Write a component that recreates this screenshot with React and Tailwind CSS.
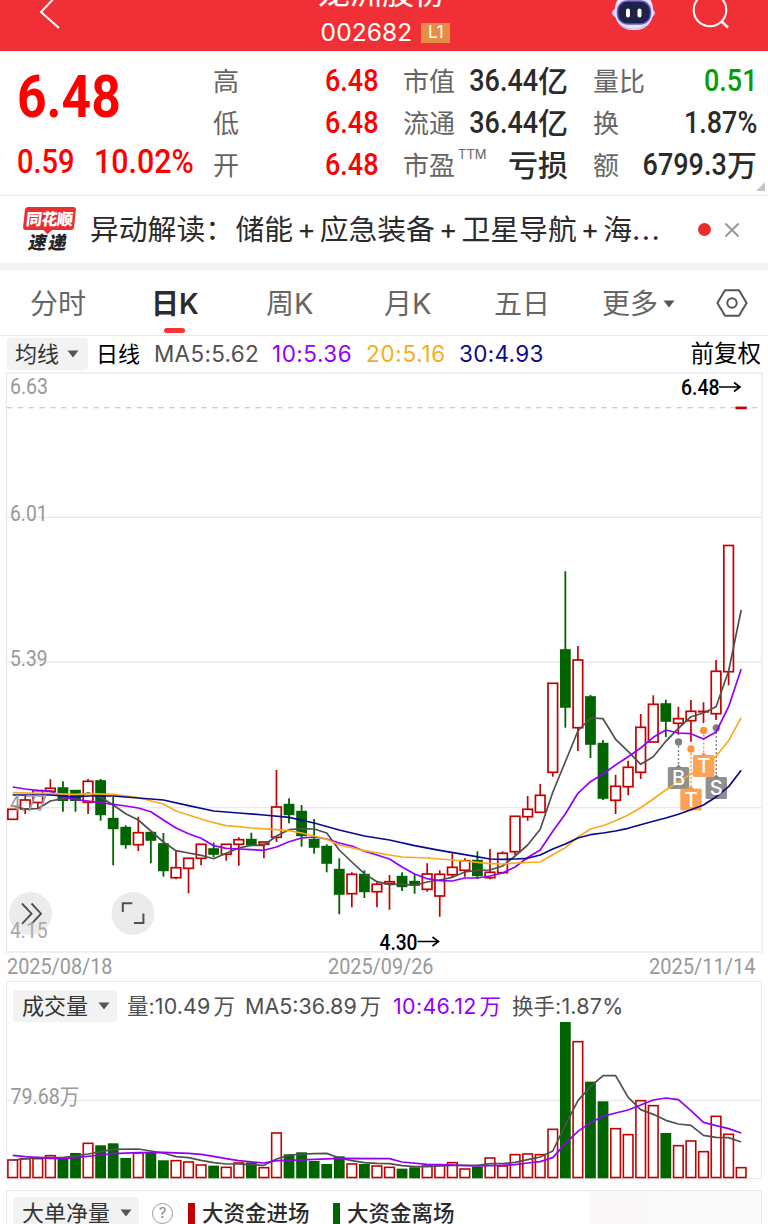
const STEP = 12.56;
const X0 = 12.7;
const RED = "#c40000";
const GREEN = "#006400";

// [high, body top, body bottom, low, color]
const candles = [
  [809.3, 809.3, 819.3, 819.3, "r"], [796, 800, 809, 814, "r"], [790.5, 790.5, 802.5, 809, "r"],
  [779.3, 788.3, 791.3, 792.5, "r"], [781.3, 787.7, 800.5, 811.7, "g"], [790.3, 790.3, 800.5, 811.7, "g"],
  [779, 781.3, 802.3, 814, "r"], [779, 780.7, 814.7, 820.7, "g"], [796.7, 818.3, 828.7, 865.3, "g"],
  [825.3, 827.3, 844.7, 848.7, "g"], [816.7, 832.7, 844.7, 851, "r"], [832.3, 832.3, 840.3, 863.3, "g"],
  [833, 843.7, 870.7, 876.7, "g"], [850.7, 867.7, 877.7, 879.3, "r"], [858.3, 858.3, 868.3, 893.3, "r"],
  [844.3, 844.3, 858.3, 865.3, "r"], [842.7, 848.7, 854.3, 857.3, "g"], [844.3, 844.3, 854.3, 860.7, "r"],
  [837.3, 839.7, 844.3, 865.7, "r"], [832.7, 839.3, 845, 845, "g"], [842, 842, 844.3, 858.3, "r"],
  [770, 807, 837.3, 842, "r"], [798.3, 804.3, 814.7, 823.3, "g"], [805, 811.3, 835.7, 846.7, "g"],
  [819, 839.3, 847.3, 853.7, "g"], [844.3, 846.3, 863.3, 872.3, "g"], [858.3, 869.3, 894.3, 914.3, "g"],
  [872.3, 874.3, 893.7, 907.3, "r"], [870.3, 874.3, 891.7, 898, "g"], [881, 884.3, 891.7, 907.3, "r"],
  [875, 881.7, 883.7, 909.7, "r"], [872.3, 876.3, 886.7, 891, "g"], [874.3, 881.3, 885.3, 893.7, "g"],
  [863.3, 874, 889.3, 891.7, "r"], [870.3, 874.3, 896, 916.7, "r"], [853.3, 867.3, 874.7, 877, "r"],
  [858.3, 860.7, 870.3, 876.7, "r"], [851.3, 860.3, 875.7, 879, "g"], [849, 872.3, 877.7, 879.3, "r"],
  [851.3, 853.3, 872.7, 872.7, "r"], [816.3, 816.3, 851.7, 855, "r"], [796, 809.3, 816.7, 820.7, "r"],
  [784, 795.3, 812.3, 812.3, "r"], [683.3, 683.3, 772.3, 776.7, "r"], [571.3, 649.7, 707.3, 727.7, "g"],
  [646, 660, 727.7, 751, "r"], [695, 696.7, 744.3, 758, "g"], [740, 743.3, 798.3, 800, "g"],
  [774.7, 786.3, 800.3, 814, "r"], [760.7, 767.3, 786.7, 795.3, "r"], [714, 727.3, 772.3, 779, "r"],
  [695.3, 704.3, 742, 742, "r"], [699.7, 703.7, 721.3, 737, "g"], [706.7, 718.7, 723.3, 734.7, "r"],
  [700, 711.3, 720.7, 741.7, "r"], [702.3, 711.4, 711.8, 723, "r"], [660, 671.3, 713.7, 720, "r"],
  [545.5, 545.5, 671.7, 685.3, "r"], [407.4, 407.4, 408.4, 408.4, "r"],
];

const averages = [
  ["#505050", [[0, 806], [1, 809], [2, 808.7], [3, 801], [4, 798.7], [5, 798], [6, 792.7], [7, 797], [8, 805], [9, 813.7], [10, 820], [11, 831], [12, 842], [13, 850.7], [14, 853], [15, 855.3], [16, 858.7], [17, 853.3], [18, 848], [19, 845.3], [20, 845.3], [21, 836], [22, 829.7], [23, 828.7], [24, 829], [25, 833], [26, 850], [27, 862], [28, 873.7], [29, 881.7], [30, 884.7], [31, 884], [32, 885.3], [33, 882], [34, 880], [35, 877.3], [36, 872], [37, 870.3], [38, 870], [39, 866], [40, 856], [41, 845], [42, 829.3], [43, 792.3], [44, 761.7], [45, 731], [46, 718], [47, 718.7], [48, 739.3], [49, 751.3], [50, 764.3], [51, 756.7], [52, 741.3], [53, 728.3], [54, 716.7], [55, 713], [56, 706.7], [57, 671], [58, 610]]],
  ["#9400f6", [[0, 787], [1, 789], [2, 790.7], [3, 791], [4, 797], [5, 799.7], [6, 801], [7, 802.7], [8, 804.3], [9, 806], [10, 808], [11, 811.7], [12, 820], [13, 828], [14, 833.7], [15, 838.3], [16, 845.7], [17, 848.3], [18, 849], [19, 849.7], [20, 850.3], [21, 847], [22, 841.7], [23, 838], [24, 837], [25, 839], [26, 843], [27, 846], [28, 851.3], [29, 855], [30, 859], [31, 867], [32, 874], [33, 878.7], [34, 880.7], [35, 881], [36, 878], [37, 878], [38, 876], [39, 873], [40, 867], [41, 857.5], [42, 850], [43, 831.3], [44, 814], [45, 793.3], [46, 781.7], [47, 774], [48, 765], [49, 756.7], [50, 748], [51, 737.3], [52, 730], [53, 733], [54, 733.7], [55, 739], [56, 732], [57, 706.7], [58, 669]]],
  ["#f8ac1c", [[0, 792.7], [5, 794.3], [6, 793.7], [8, 794.3], [10, 797.7], [12, 804], [13, 811], [14, 815], [15, 819], [16, 822.7], [17, 825.7], [18, 826.7], [19, 828], [21, 829.7], [22, 830.7], [23, 833], [24, 836], [25, 839.3], [26, 845], [28, 850.7], [30, 855], [31, 857], [33, 858], [35, 860], [36, 861], [38, 863.7], [39, 864], [40, 863], [42, 862], [43, 854.7], [44, 847.7], [45, 837.3], [46, 829], [47, 825.7], [48, 820.7], [49, 815], [50, 807.7], [51, 799], [52, 790], [53, 782], [54, 774], [55, 766], [56, 756], [57, 740.7], [58, 717.7]]],
  ["#0a0a8c", [[0, 795], [3, 795], [5, 797], [6, 796], [8, 796], [10, 798], [12, 800], [14, 805.7], [16, 811], [18, 813], [20, 815], [22, 817.3], [24, 823], [26, 830], [28, 836], [30, 840], [32, 845.7], [34, 850.3], [36, 854.7], [38, 859], [39, 859.3], [40, 859], [41, 858.3], [42, 855], [43, 849], [44, 844], [45, 838], [46, 834.7], [47, 833], [48, 831], [49, 828.3], [50, 824.7], [51, 821.3], [52, 818], [53, 814.3], [54, 809.7], [55, 805], [56, 797], [57, 786.7], [58, 770.3]]],
];

// bar heights in thirds of a pixel
const volumes = [57, 61, 61, 70, 59, 76, 107, 99, 105, 61, 78, 78, 54, 55, 51, 42, 38, 35, 48, 48, 34, 138, 72, 78, 52, 43, 66, 45, 43, 39, 35, 29, 33, 39, 42, 49, 30, 35, 63, 39, 73, 75, 73, 149, 469, 412, 290, 231, 151, 133, 235, 220, 136, 100, 114, 82, 188, 134, 34];

const volumeLines = [
  ["#505050", [[0, 540], [2, 533], [4, 533], [6, 522], [8, 508], [10, 507], [12, 519], [13, 530], [14, 533], [15, 541], [16, 548], [17, 552], [18, 552], [20, 556], [21, 537], [22, 525], [24, 521], [25, 520], [26, 534], [27, 542], [28, 548], [29, 550], [30, 551], [31, 557], [32, 560], [33, 560], [34, 558], [35, 556], [37, 556], [38, 551], [39, 551], [40, 547], [41, 539], [42, 531], [43, 513], [44, 435], [45, 362], [46, 320], [47, 287], [48, 287], [49, 352], [50, 389], [51, 403], [52, 421], [53, 432], [54, 436], [55, 466], [56, 472], [57, 473], [58, 486]]],
  ["#9400f6", [[0, 526], [1, 530], [3, 535], [4, 536], [5, 533], [7, 525], [8, 521], [10, 518], [12, 517], [14, 520], [15, 523], [16, 529], [17, 536], [18, 542], [20, 549], [21, 542], [22, 541], [24, 538], [26, 535], [30, 536], [31, 546], [33, 553], [34, 554], [37, 558], [39, 556], [40, 554], [41, 549], [42, 545], [43, 533], [44, 491], [45, 454], [46, 428], [47, 409], [48, 399], [49, 390], [50, 375], [51, 360], [52, 354], [53, 359], [54, 392], [55, 427], [56, 437], [57, 446], [58, 459]]],
];

const markers = [
  { x: 678.5, dot: 742, top: 767, label: "B", color: "#808080" },
  { x: 716.3, dot: 728, top: 777, label: "S", color: "#808080" },
  { x: 691, dot: 749, top: 788.5, label: "T", color: "#ff9440" },
  { x: 703.7, dot: 730.5, top: 755, label: "T", color: "#ff9440" },
];

const cx = (i) => X0 + i * STEP;
const toPoints = (pts, f = (y) => y) => pts.map(([i, y]) => `${cx(i)},${f(y)}`).join(" ");

function Caret({ className }) {
  return (
    <svg viewBox="0 0 12 8" className={className}>
      <path d="M.5.5h11L6 7.5z" fill="currentColor" />
    </svg>
  );
}

function Dropdown({ label, className }) {
  return (
    <button className={`flex items-center rounded-sm bg-[#f2f2f2] text-[22px] leading-none text-[#333] ${className}`}>
      {label}
      <Caret className="h-2 w-3 text-[#555]" />
    </button>
  );
}

function Header() {
  return (
    <header className="flex h-[51px] items-end justify-between overflow-hidden bg-[#f03036] text-white">
      <svg className="h-[51px] w-[250px]" viewBox="0 0 250 51">
        <path d="M60 -8L41 12L59 28" fill="none" stroke="#fff" strokeWidth="2" />
      </svg>
      <div className="flex flex-col items-center pl-[3px]">
        <div className="mr-[7px] h-[30px] text-[32px] leading-[26px] whitespace-nowrap">龙洲股份</div>
        <div className="mt-[9px] mb-[5px] flex h-[27px] items-center">
          <span className="font-[Inter] text-[24.5px] tracking-[0.1px]">002682</span>
          <span className="ml-[9px] flex h-5 w-[29px] items-center justify-center bg-[#e58e45] font-[Inter] text-[17px]">L1</span>
        </div>
      </div>
      <svg className="h-[51px] w-[250px]" viewBox="518 0 250 51">
        <ellipse cx="633.5" cy="13" rx="21.5" ry="8" fill="#c9cdf5" />
        <rect x="615" y="-8" width="38" height="38" rx="17" fill="#e4e6fb" />
        <path d="M619 23q15 11 29 0l-3 4q-12 5-23 0z" fill="#c3c5ee" />
        <rect x="617.5" y="1" width="33" height="23" rx="10" fill="#1d2347" stroke="#7054cc" strokeWidth="1.5" />
        <rect x="626" y="8.5" width="4" height="9" rx="2" fill="#fff" />
        <rect x="637.5" y="8.5" width="4" height="9" rx="2" fill="#fff" />
        <circle cx="710" cy="10" r="16.3" fill="none" stroke="#fff" strokeWidth="2" />
        <path d="M721.5 21.5L728 27.5" stroke="#fff" strokeWidth="2.4" />
      </svg>
    </header>
  );
}

function Stat({ label, sup, value, unit, color = "text-[#2b2b2b]" }) {
  return (
    <div className="flex h-[42px] items-center justify-between whitespace-nowrap">
      <span className="flex shrink-0 text-[26px] text-[#666]">
        {label}
        {sup && <sup className="top-[2px] ml-[3px] font-[Inter] text-[13px] leading-none">{sup}</sup>}
      </span>
      <span className={`flex w-0 items-center justify-end font-medium ${color}`}>
        <span className="inline-block origin-right scale-x-[0.87] font-[Roboto] text-[31px]">{value}</span>
        {unit && <span className="text-[30px] leading-none">{unit}</span>}
      </span>
    </div>
  );
}

function Quote() {
  return (
    <section className="relative flex h-36 pt-[9px]">
      <div className="w-[196px] pl-[17px] font-[Roboto] text-[#ff0000]">
        <div className="h-[74px] pt-[7px] text-[60px] leading-[60px] font-bold">
          <span className="inline-block origin-left scale-x-[0.86]">6.48</span>
        </div>
        <div className="flex pt-[11px] text-[33px] leading-[34px] font-medium">
          <span className="inline-block w-[77px] shrink-0 origin-left scale-x-[0.88]">0.59</span>
          <span className="inline-block origin-left scale-x-[0.92]">10.02%</span>
        </div>
      </div>
      <div className="ml-[17px] w-[165px]">
        <Stat label="高" value="6.48" color="text-[#ff0000]" />
        <Stat label="低" value="6.48" color="text-[#ff0000]" />
        <Stat label="开" value="6.48" color="text-[#ff0000]" />
      </div>
      <div className="ml-[25px] w-[165px]">
        <Stat label="市值" value="36.44" unit="亿" />
        <Stat label="流通" value="36.44" unit="亿" />
        <Stat label="市盈" sup="TTM" unit="亏损" />
      </div>
      <div className="ml-[25px] w-[164px]">
        <Stat label="量比" value="0.51" color="text-[#0a9b0a]" />
        <Stat label="换" value="1.87%" />
        <Stat label="额" value="6799.3" unit="万" />
      </div>
      <svg className="absolute right-[3px] bottom-1 h-[9px] w-[9px]" viewBox="0 0 9 9">
        <path d="M9 0v9H0z" fill="#c4c4c4" />
      </svg>
    </section>
  );
}

function Plus() {
  return <span className="relative -top-px inline-block w-[26.6px] text-center font-[Inter] text-[28px] leading-none">+</span>;
}

function News() {
  return (
    <section className="flex h-[68px] items-center border-t border-[#e9e9e9] pl-[22px]">
      <div className="flex w-[54px] flex-col items-center">
        <div className="relative flex h-[23px] w-[51px] -skew-x-6 items-center justify-center rounded-[3px] bg-[#e8302f] text-[16px] font-black tracking-[-0.5px] text-white">
          同花顺
          <span className="absolute top-[20px] left-[22px] h-[6px] w-[6px] rotate-45 bg-[#e8302f]"></span>
        </div>
        <div className="mt-[3px] -skew-x-12 text-[18px] leading-[19px] font-black tracking-[2px] text-[#252525]">速递</div>
      </div>
      <div className="ml-[14px] flex w-[590px] text-[28.8px] whitespace-nowrap text-[#2b2b2b]">
        <span className="w-[145.5px]">异动解读：</span>
        <span>储能<Plus />应急装备<Plus />卫星导航<Plus />海<span className="font-[Inter] tracking-[1.4px]">...</span></span>
      </div>
      <span className="ml-[18px] h-[13px] w-[13px] rounded-full bg-[#ea2c2c]"></span>
      <svg className="ml-[13px] h-4 w-4" viewBox="0 0 16 16">
        <path d="M1.5 1.5l13 13M14.5 1.5l-13 13" stroke="#999" strokeWidth="2" />
      </svg>
    </section>
  );
}

function Tabs() {
  return (
    <nav className="flex h-[73px] items-center border-t-[7px] border-b border-t-[#f3f3f3] border-b-[#e9e9e9] pt-[2px] text-[28px] text-[#666]">
      <span className="w-[86px] pl-[30px] whitespace-nowrap">分时</span>
      <span className="relative ml-[65px] w-[48px] font-bold whitespace-nowrap text-[#2b2b2b]">
        日<span className="font-[Inter] text-[28px] font-semibold">K</span>
        <span className="absolute -bottom-[8px] left-[13px] h-[5px] w-[21px] rounded-full bg-[#fb3434]"></span>
      </span>
      <span className="ml-[67px] w-[49px] whitespace-nowrap">周<span className="font-[Inter] text-[29px]">K</span></span>
      <span className="ml-[69px] w-[49px] whitespace-nowrap">月<span className="font-[Inter] text-[29px]">K</span></span>
      <span className="ml-[61px] w-[56px] whitespace-nowrap">五日</span>
      <span className="ml-[52px] w-[58px] whitespace-nowrap">更多</span>
      <Caret className="ml-[3px] h-2 w-3 text-[#555]" />
      <svg className="relative -top-px ml-[41px] h-7 w-8" viewBox="0 0 32 28">
        <path d="M9 1.2h14L30.6 14 23 26.8H9L1.4 14z" fill="none" stroke="#555" strokeWidth="2" strokeLinejoin="round" />
        <circle cx="16" cy="14" r="4.7" fill="none" stroke="#555" strokeWidth="2" />
      </svg>
    </nav>
  );
}

function MaLegend() {
  return (
    <div className="flex h-9 items-center pl-[7px] text-[22px] whitespace-nowrap">
      <Dropdown label="均线" className="h-8 w-[81px] gap-[8px] pl-2" />
      <span className="ml-[8px] w-[44px] text-black">日线</span>
      <div className="ml-[14px] flex font-[Inter] text-[22.5px] tracking-[0.3px]">
        <span className="w-[118px] text-[#505050]">MA5:5.62</span>
        <span className="w-[94px] tracking-[0.5px] text-[#9400f6]">10:5.36</span>
        <span className="w-[93px] tracking-[0.7px] text-[#f8ac1c]">20:5.16</span>
        <span className="w-[90px] text-[#0a0a8c]">30:4.93</span>
      </div>
      <span className="ml-auto pr-[7px] text-[23.5px] text-black">前复权</span>
    </div>
  );
}

function AxisLabel({ x, y, w, fill = "#999", weight = "400", children }) {
  return (
    <text x={x} y={y} textLength={w} lengthAdjust="spacingAndGlyphs" fontFamily="Roboto, 'Noto Sans CJK SC', sans-serif" fontSize="21.5" fontWeight={weight} fill={fill}>
      {children}
    </text>
  );
}

function Arrow({ x, y }) {
  return <path d={`M${x} ${y}h21m-6-4.5l6 4.5l-6 4.5`} fill="none" stroke="#000" strokeWidth="1.6" />;
}

function Candle({ i, data }) {
  const [high, top, bottom, low, color] = data;
  const x = cx(i);
  if (color === "g") {
    return (
      <g fill={GREEN}>
        <rect x={x - 0.9} y={high} width="1.8" height={low - high} />
        <rect x={x - 5.4} y={top - 0.5} width="10.8" height={bottom - top + 1} />
      </g>
    );
  }
  return (
    <g stroke={RED} strokeWidth="1.7" fill="none">
      <path d={`M${x} ${high}V${top}M${x} ${bottom}V${low}`} />
      <rect x={x - 4.8} y={top} width="9.6" height={bottom - top} fill="#fff" />
    </g>
  );
}

function KLineChart() {
  return (
    <svg className="block h-[609px] w-[768px]" viewBox="0 372 768 609">
      <rect x="6.5" y="373" width="755.5" height="579" fill="none" stroke="#e8e8e8" strokeWidth="1.3" />
      <path d="M7 517.3H762M7 662.2H762M7 807.6H762" stroke="#e8e8e8" strokeWidth="1.2" />
      <path d="M7 407.8H762" stroke="#ddb98a" strokeWidth="1.1" strokeDasharray="5.5 5.3" />
      {candles.map((c, i) => (
        <Candle key={i} i={i} data={c} />
      ))}
      {markers.map((m) => (
        <g key={m.x}>
          <circle cx={m.x} cy={m.dot} r="3.7" fill={m.color} />
          <path d={`M${m.x} ${m.dot}V${m.top}`} stroke={m.color} strokeWidth="1.4" strokeDasharray="2 2" />
          <path d={`M${m.x - 3.5} ${m.top + 1}l3.5-3.5l3.5 3.5z`} fill={m.color} />
          <rect x={m.x - 10.7} y={m.top} width="21.4" height="22" rx="1.5" fill={m.color} fillOpacity="0.87" />
        </g>
      ))}
      {averages.map(([color, pts]) => (
        <polyline key={color} points={toPoints(pts)} fill="none" stroke={color} strokeWidth="1.7" strokeLinejoin="round" />
      ))}
      {markers.map((m) => (
        <text key={m.x} x={m.x} y={m.top + 18} fontFamily="Inter, sans-serif" fontSize="20" fontWeight="500" fill="#fff" textAnchor="middle">
          {m.label}
        </text>
      ))}
      <AxisLabel x="10" y="393.5" w="38">6.63</AxisLabel>
      <AxisLabel x="10" y="520.5" w="37.5">6.01</AxisLabel>
      <AxisLabel x="10" y="666" w="37.5">5.39</AxisLabel>
      <AxisLabel x="10" y="810.5" w="37">4.77</AxisLabel>
      <AxisLabel x="681" y="395" w="38.5" fill="#000" weight="500">6.48</AxisLabel>
      <Arrow x={719} y={387} />
      <AxisLabel x="379.5" y="949.5" w="38" fill="#000" weight="500">4.30</AxisLabel>
      <Arrow x={417.5} y={941.5} />
      <circle cx="30.5" cy="913.5" r="21.5" fill="#ebebeb" />
      <path d="M22 903.5l9.5 10.2l-9.5 10.2M31.5 903.5l9.5 10.2l-9.5 10.2" fill="none" stroke="#505050" strokeWidth="1.9" />
      <circle cx="133" cy="913.5" r="21.5" fill="#ebebeb" />
      <path d="M122.8 912v-8.7h9.5M134 923h9.4v-9.5" fill="none" stroke="#505050" strokeWidth="2" />
      <AxisLabel x="10" y="938" w="37.5" fill="#a9a9a9">4.15</AxisLabel>
      <AxisLabel x="7" y="973.5" w="105.5">2025/08/18</AxisLabel>
      <AxisLabel x="328" y="973.5" w="105.5">2025/09/26</AxisLabel>
      <AxisLabel x="649" y="973.5" w="106.5">2025/11/14</AxisLabel>
    </svg>
  );
}

function VolumePanel() {
  return (
    <section className="mx-[6px] h-[198px] border-x border-t border-[#e8e8e8]">
      <div className="flex h-[39px] items-center pt-[8px] pl-[6px] text-[22px] whitespace-nowrap text-[#505050]">
        <Dropdown label="成交量" className="h-8 w-[104px] gap-[10px] pl-[9px]" />
        <div className="ml-[10px] flex pt-px text-[21.5px]">
          <span className="w-[118px]">量<span className="font-[Inter] tracking-[0.1px]">:10.49</span><span className="ml-[3px]">万</span></span>
          <span className="w-[148px]"><span className="font-[Inter]">MA5:36.89</span><span className="ml-[3px]">万</span></span>
          <span className="w-[119px] text-[#9400f6]"><span className="font-[Inter] tracking-[0.3px]">10:46.12</span><span className="ml-[3px]">万</span></span>
          <span>换手<span className="font-[Inter] tracking-[0.2px]">:1.87%</span></span>
        </div>
      </div>
      <svg className="block h-[158px] w-full" viewBox="7 1021 754 158">
        <path d="M7 1100.3H762M7 1178.6H762" stroke="#e8e8e8" strokeWidth="1.2" />
        <AxisLabel x="10.5" y="1103.5" w="69">79.68万</AxisLabel>
        {volumes.map((v, i) =>
          candles[i][4] === "g" ? (
            <rect key={i} x={cx(i) - 5.4} y={1178.3 - v / 3} width="10.8" height={v / 3} fill={GREEN} />
          ) : (
            <rect key={i} x={cx(i) - 4.8} y={1179 - v / 3} width="9.6" height={v / 3 - 1.5} fill="#fff" stroke={RED} strokeWidth="1.6" />
          )
        )}
        {volumeLines.map(([color, pts]) => (
          <polyline key={color} points={toPoints(pts, (y) => 980 + y / 3)} fill="none" stroke={color} strokeWidth="1.7" strokeLinejoin="round" />
        ))}
      </svg>
    </section>
  );
}

function NetOrderPanel() {
  return (
    <section className="mx-[6px] mt-[11px] flex h-[60px] border border-[#e8e8e8]">
      <div className="flex h-[44px] w-[583px] items-center pl-[6px] text-[22px] font-medium whitespace-nowrap text-[#2b2b2b]">
        <Dropdown label="大单净量" className="h-8 w-[126px] gap-[10px] pl-[9px] font-normal" />
        <span className="ml-[13px] flex h-[21px] w-[21px] items-center justify-center rounded-full border-[1.5px] border-[#999] font-[Inter] text-[15px] font-normal text-[#888]">?</span>
        <span className="mr-[7px] ml-[15px] h-[21px] w-[7px] bg-[#c40000]"></span>
        <span className="w-[108px] text-[21.5px]">大资金进场</span>
        <span className="mr-[7px] ml-[23px] h-[21px] w-[7px] bg-[#006400]"></span>
        <span className="text-[21.5px]">大资金离场</span>
      </div>
      <div className="flex-1 bg-gradient-to-r from-[#faf7f7] to-[#fafafa]"></div>
    </section>
  );
}

export default function App() {
  return (
    <div className="h-[1224px] w-[768px] overflow-hidden bg-white font-[Inter,'Noto_Sans_CJK_SC',sans-serif]">
      <Header />
      <Quote />
      <News />
      <Tabs />
      <MaLegend />
      <KLineChart />
      <VolumePanel />
      <NetOrderPanel />
    </div>
  );
}
